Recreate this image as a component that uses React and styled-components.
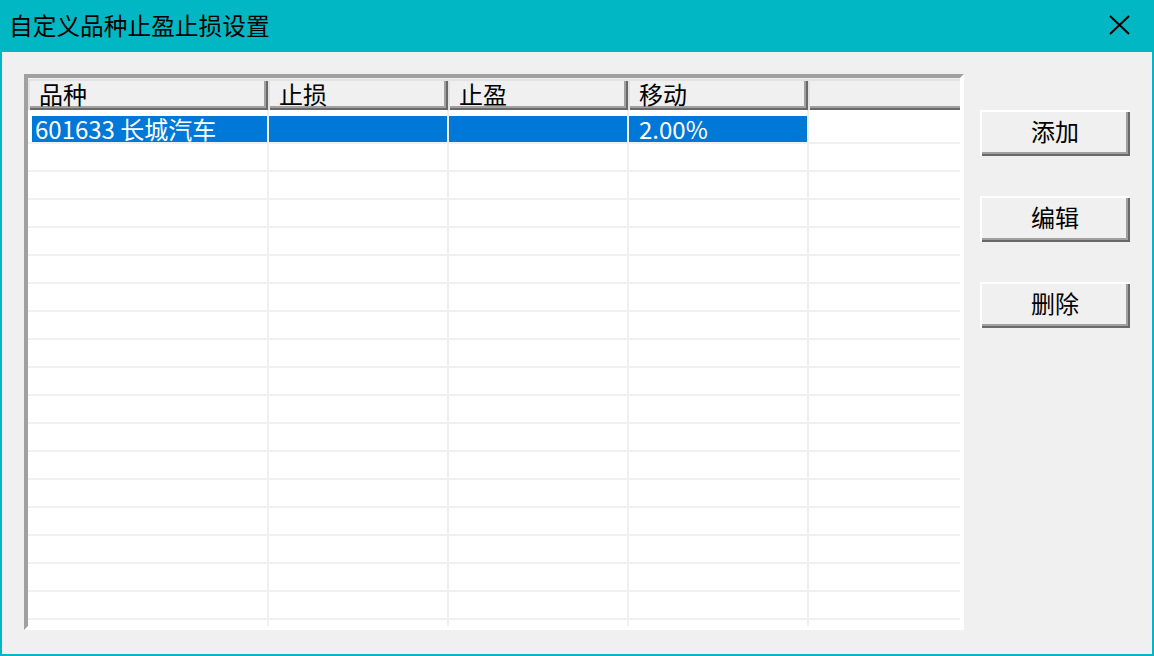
import React from "react";
import styled, { createGlobalStyle } from "styled-components";

const Global = createGlobalStyle`
  html, body { margin: 0; padding: 0; }
  body {
    width: 1154px;
    height: 656px;
    overflow: hidden;
    font-family: "Noto Sans CJK SC", "Noto Sans", sans-serif;
  }
`;

const FONT = `"Noto Sans CJK SC", "Noto Sans", sans-serif`;

const Window = styled.div`
  box-sizing: border-box;
  width: 1154px;
  height: 656px;
  background: #00b7c3;
  padding: 0 2px 2px 2px;
  display: flex;
  flex-direction: column;
`;

const TitleBar = styled.div`
  height: 52px;
  flex: none;
  display: flex;
  align-items: flex-start;
  justify-content: space-between;
`;

const Title = styled.div`
  font-family: ${FONT};
  font-size: 23.7px;
  line-height: 50px;
  color: #000;
  padding-left: 7px;
  white-space: nowrap;
`;

const CloseButton = styled.div`
  width: 66px;
  height: 50px;
  display: flex;
  align-items: center;
  justify-content: center;
`;

const Body = styled.div`
  flex: 1;
  background: #f0f0f0;
  display: flex;
  align-items: flex-start;
  padding: 22px 0 0 22px;
  gap: 16px;
`;

const ListBox = styled.div`
  box-sizing: border-box;
  width: 940px;
  height: 556px;
  border: 4px solid;
  border-color: #a0a0a0 #ffffff #ffffff #a0a0a0;
  background: #fff;
  display: flex;
  flex-direction: column;
`;

const Header = styled.div`
  display: flex;
  height: 32px;
  flex: none;
  background: #fff;
`;

const HeaderCell = styled.div`
  box-sizing: border-box;
  flex: ${(p) => (p.$w ? "none" : 1)};
  width: ${(p) => (p.$w ? `${p.$w}px` : "auto")};
  height: 32px;
  background: #f0f0f0;
  box-shadow: ${(p) =>
    p.$w
      ? "inset 0 1px 0 #f0f0f0, inset 2px 3px 0 #e3e3e3, inset -2px -2px 0 #696969, inset -4px -4px 0 #a0a0a0"
      : "inset 0 1px 0 #f0f0f0, inset 2px 3px 0 #e3e3e3, inset 0 -2px 0 #696969, inset 0 -4px 0 #a0a0a0"};
  font-family: ${FONT};
  font-size: 24px;
  line-height: 30px;
  padding: 1px 0 0 11px;
  color: #000;
  white-space: nowrap;
`;

const Rows = styled.div`
  flex: 1;
  display: flex;
  flex-direction: column;
`;

const Row = styled.div`
  display: flex;
  flex: ${(p) => (p.$fill ? 1 : "none")};
  height: ${(p) => (p.$fill ? "auto" : `${p.$h}px`)};
  border-bottom: ${(p) => (p.$line ? "2px solid #f0f0f0" : "none")};
`;

const Cell = styled.div`
  box-sizing: border-box;
  flex: ${(p) => (p.$w ? "none" : 1)};
  width: ${(p) => (p.$w ? `${p.$w}px` : "auto")};
  border-right: ${(p) => (p.$w ? "2px solid #f0f0f0" : "none")};
  display: flex;
`;

const Fill = styled.div`
  flex: 1;
  margin-left: ${(p) => p.$inset}px;
  background: ${(p) => (p.$selected ? "#0078d7" : "transparent")};
  color: ${(p) => (p.$selected ? "#fff" : "#000")};
  font-family: ${FONT};
  font-size: 24px;
  line-height: 26px;
  padding-left: ${(p) => p.$pad}px;
  white-space: nowrap;
`;

const Side = styled.div`
  display: flex;
  flex-direction: column;
  gap: 40px;
  padding-top: 36px;
`;

const Button = styled.button`
  box-sizing: border-box;
  width: 150px;
  height: 46px;
  border: none;
  margin: 0;
  padding: 0 0 4px 0;
  background: #f0f0f0;
  box-shadow: inset 2px 2px 0 #ffffff, inset -2px -2px 0 #696969,
    inset -4px -4px 0 #a0a0a0;
  font-family: ${FONT};
  font-size: 24px;
  line-height: 42px;
  color: #000;
  text-align: center;
`;

const COLS = [241, 180, 180, 180, 0];
const HEAD_COLS = [240, 180, 180, 180, 0];
const HEADERS = ["品种", "止损", "止盈", "移动", ""];

const data = [["601633 长城汽车", "", "", "2.00%", ""]];

function ListRow({ values, selected, h = 26, line = true, fill = false }) {
  return (
    <Row $h={h} $line={line} $fill={fill}>
      {COLS.map((w, i) => (
        <Cell key={i} $w={w}>
          <Fill
            $selected={selected && i < 4}
            $inset={i === 0 ? 4 : 0}
            $pad={i === 0 ? 3 : 10}
          >
            {values ? values[i] : ""}
          </Fill>
        </Cell>
      ))}
    </Row>
  );
}

export default function App() {
  const empty = Array.from({ length: 17 });
  return (
    <>
      <Global />
      <Window>
        <TitleBar>
          <Title>自定义品种止盈止损设置</Title>
          <CloseButton>
            <svg width="21" height="20" viewBox="0 0 21 20">
              <path d="M1 1 L20 19 M20 1 L1 19" stroke="#000" strokeWidth="2" fill="none" />
            </svg>
          </CloseButton>
        </TitleBar>
        <Body>
          <ListBox>
            <Header>
              {HEADERS.map((t, i) => (
                <HeaderCell key={i} $w={HEAD_COLS[i]}>
                  {t}
                </HeaderCell>
              ))}
            </Header>
            <Rows>
              <ListRow h={6} line={false} />
              {data.map((r, i) => (
                <ListRow key={i} values={r} selected />
              ))}
              {empty.map((_, i) => (
                <ListRow key={`e${i}`} />
              ))}
              <ListRow fill line={false} />
            </Rows>
          </ListBox>
          <Side>
            <Button>添加</Button>
            <Button>编辑</Button>
            <Button>删除</Button>
          </Side>
        </Body>
      </Window>
    </>
  );
}
